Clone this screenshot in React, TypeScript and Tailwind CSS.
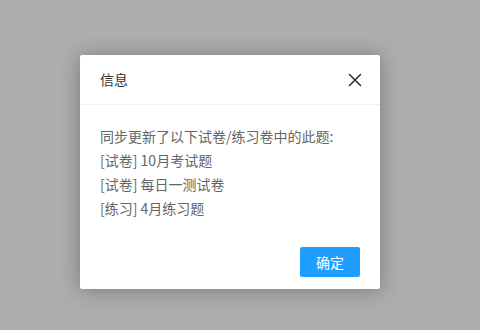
export default function App() {
  return (
    <div
      className="w-[480px] h-[330px] bg-[#adadad] flex items-start justify-start pl-[80px] pt-[55px]"
      style={{ fontFamily: '"Noto Sans CJK SC", "Noto Sans", sans-serif' }}
    >
      <div className="w-[300px] h-[234px] bg-white rounded-[2px] shadow-[0_1px_20px_rgba(0,0,0,0.3)] flex flex-col">
        <div className="h-[50px] border-b border-[#f0f0f0] flex items-center justify-between pl-5 pr-[18px]">
          <span className="text-[14px] text-[#333]">信息</span>
          <svg width="14" height="14" viewBox="0 0 14 14" className="text-[#2f3033]">
            <path d="M1.5 1.5 L12.5 12.5 M12.5 1.5 L1.5 12.5" stroke="currentColor" strokeWidth="1.6" strokeLinecap="round" />
          </svg>
        </div>
        <div className="px-5 pt-[19px] text-[14px] leading-[24px] text-[#666]">
          <div>同步更新了以下试卷/练习卷中的此题:</div>
          <div>[试卷] 10月考试题</div>
          <div>[试卷] 每日一测试卷</div>
          <div>[练习] 4月练习题</div>
        </div>
        <div className="mt-auto flex justify-end px-5 pb-3">
          <button className="w-[60px] h-[30px] bg-[#1e9fff] text-white text-[14px] rounded-[2px] flex items-center justify-center">
            确定
          </button>
        </div>
      </div>
    </div>
  );
}
